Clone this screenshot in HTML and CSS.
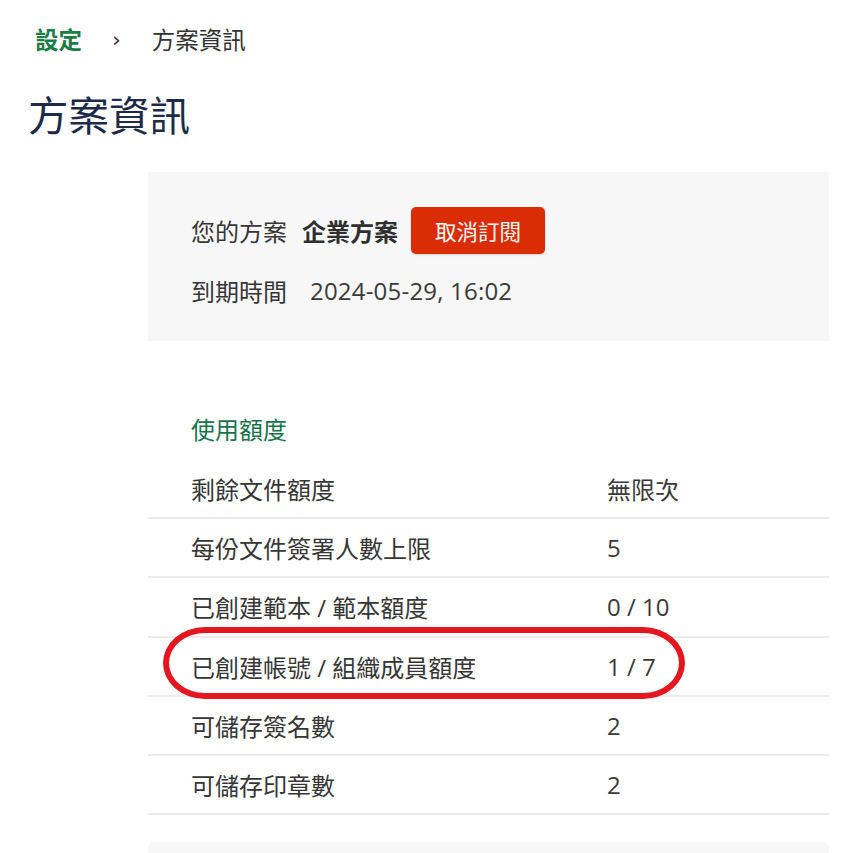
FILE: index.html
```html
<!DOCTYPE html>
<html lang="zh-Hant">
<head>
<meta charset="utf-8">
<title>方案資訊</title>
<link rel="stylesheet" href="styles.css">
</head>
<body>
<nav class="crumbs">
  <a class="crumb-link" href="#">設定</a>
  <span class="crumb-sep">›</span>
  <span class="crumb-current">方案資訊</span>
</nav>
<h1 class="page-title">方案資訊</h1>
<main class="content">
  <section class="plan-card">
    <div class="plan-row">
      <span class="plan-label">您的方案</span>
      <strong class="plan-name">企業方案</strong>
      <button class="cancel-btn" type="button">取消訂閱</button>
    </div>
    <div class="plan-row">
      <span class="plan-label">到期時間</span>
      <span class="plan-date">2024-05-29, 16:02</span>
    </div>
  </section>
  <section class="usage">
    <h2 class="usage-title">使用額度</h2>
    <div class="usage-row"><span class="usage-label">剩餘文件額度</span><span class="usage-value">無限次</span></div>
    <div class="usage-row"><span class="usage-label">每份文件簽署人數上限</span><span class="usage-value">5</span></div>
    <div class="usage-row"><span class="usage-label">已創建範本 / 範本額度</span><span class="usage-value">0 / 10</span></div>
    <div class="usage-row highlighted"><span class="usage-label">已創建帳號 / 組織成員額度</span><span class="usage-value">1 / 7</span><span class="circle-mark"></span></div>
    <div class="usage-row"><span class="usage-label">可儲存簽名數</span><span class="usage-value">2</span></div>
    <div class="usage-row"><span class="usage-label">可儲存印章數</span><span class="usage-value">2</span></div>
  </section>
  <section class="next-card"></section>
</main>
</body>
</html>
```

FILE: styles.css
```css
html, body {
  margin: 0;
  padding: 0;
  background: #ffffff;
}
body {
  font-family: "Open Sans", "Noto Sans CJK TC", sans-serif;
  color: #363636;
  font-size: 24px;
  overflow: hidden;
  height: 853px;
}
.crumbs {
  display: flex;
  align-items: center;
  padding: 23px 0 0 35px;
  height: 34px;
  font-size: 23.5px;
  line-height: 34px;
}
.crumb-link {
  color: #1b7d46;
  font-weight: 700;
  text-decoration: none;
}
.crumb-sep {
  margin: 0 31px 0 30px;
  color: #333;
  font-size: 22px;
  font-family: "DejaVu Sans", sans-serif;
}
.crumb-current {
  color: #333;
}
.page-title {
  margin: 0;
  padding: 31px 0 0 28px;
  font-size: 40.5px;
  line-height: 56px;
  font-weight: 400;
  color: #1d2a48;
}
.content {
  margin: 28px 0 0 148px;
  width: 681px;
}
.plan-card {
  background: #f7f7f7;
  height: 169px;
  box-sizing: border-box;
  padding: 35px 0 0 43px;
  display: flex;
  flex-direction: column;
  gap: 13px;
}
.plan-row {
  display: flex;
  align-items: center;
  height: 47px;
}
.plan-name {
  margin-left: 15px;
  font-weight: 700;
  color: #2f2f2f;
}
.cancel-btn {
  margin-left: 13px;
  height: 47px;
  padding: 0 24px;
  border: none;
  border-radius: 5px;
  background: #da2c05;
  color: #ffffff;
  font-family: "Noto Sans CJK TC", sans-serif;
  font-size: 21.5px;
  box-shadow: 0 1px 2px rgba(0,0,0,0.15);
}
.plan-date {
  margin-left: 23px;
  font-size: 24px;
  letter-spacing: 0.2px;
  color: #3a3a3a;
}
.usage {
  margin-top: 69px;
}
.usage-title {
  margin: 0;
  padding-left: 43px;
  font-size: 24px;
  font-weight: 400;
  line-height: 40px;
  color: #17744a;
  height: 40px;
}
.usage-row {
  position: relative;
  display: flex;
  align-items: center;
  height: 57.2px;
  border-bottom: 2px solid #ebebeb;
}
.usage-title + .usage-row {
  margin-top: 10px;
}
.usage-label {
  width: 416px;
  padding-left: 43px;
}
.usage-value {
  color: #3a3a3a;
}
.circle-mark {
  position: absolute;
  left: 15px;
  top: -11px;
  width: 522px;
  height: 72px;
  box-sizing: border-box;
  border: 6px solid #e4161f;
  border-radius: 42px / 36px;
  pointer-events: none;
}
.next-card {
  margin-top: 27px;
  height: 40px;
  background: #f7f7f8;
  border-radius: 6px;
}
```
